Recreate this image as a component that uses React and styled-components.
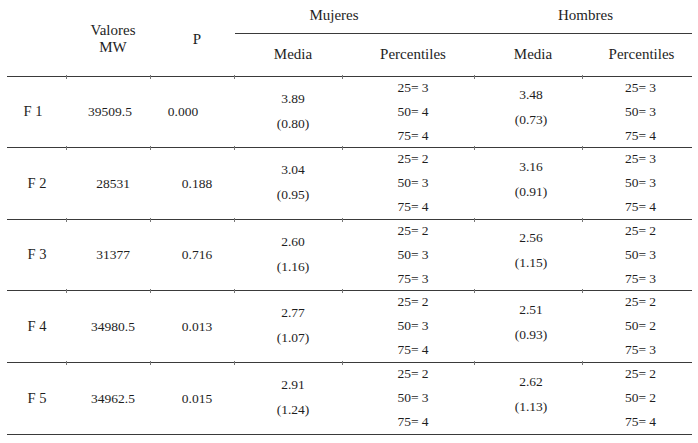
import React from "react";
import styled, { createGlobalStyle } from "styled-components";

const Global = createGlobalStyle`
  html, body { margin: 0; padding: 0; background: #fff; }
  body { font-family: "Liberation Serif", "Times New Roman", serif; color: #1e1e1e; }
`;

const Page = styled.div`
  padding: 0 0 0 7px;
  width: 698px;
  height: 443px;
  box-sizing: border-box;
  overflow: hidden;
`;

const Table = styled.table`
  border-collapse: collapse;
  table-layout: fixed;
  width: 685px;
`;

const HeadRow = styled.tr`
  height: ${(p) => p.$h}px;
`;

const Th = styled.th`
  font-weight: normal;
  font-size: 15px;
  line-height: 17px;
  text-align: center;
  vertical-align: middle;
  padding: ${(p) => (p.$pad ? p.$pad : "0 0 0 8px")};
  border-bottom: ${(p) => (p.$line ? "1px solid #3a3a3a" : "none")};
  white-space: nowrap;
`;

const BodyRow = styled.tr`
  height: ${(p) => p.$h}px;
  border-top: 1px solid #3a3a3a;
  border-bottom: ${(p) => (p.$last ? "1px solid #3a3a3a" : "none")};
`;

const Td = styled.td`
  position: relative;
  height: ${(p) => p.$h - 1}px;
  font-size: 13.5px;
  line-height: 17px;
  text-align: center;
  vertical-align: middle;
  padding: ${(p) => p.$pad || "0 0 0 8px"};
  white-space: nowrap;
  box-sizing: border-box;

  ${(p) =>
    p.$tick &&
    `
    &::before {
      content: "";
      position: absolute;
      left: -1px;
      top: -2px;
      width: 1px;
      height: 4px;
      background: #777;
    }
  `}
`;

const Label = styled(Td)`
  font-size: 14.5px;
`;

const StackBox = styled.div`
  line-height: ${(p) => p.$lh}px;
  margin: -6px 0;
`;

const Line = styled.div`
  display: block;
`;

const data = [
  { f: "F 1", mw: "39509.5", p: "0.000", mm: ["3.89", "(0.80)"], mp: ["25= 3", "50= 4", "75= 4"], hm: ["3.48", "(0.73)"], hp: ["25= 3", "50= 3", "75= 4"], shift: true, h: 71 },
  { f: "F 2", mw: "28531", p: "0.188", mm: ["3.04", "(0.95)"], mp: ["25= 2", "50= 3", "75= 4"], hm: ["3.16", "(0.91)"], hp: ["25= 3", "50= 3", "75= 4"], h: 72 },
  { f: "F 3", mw: "31377", p: "0.716", mm: ["2.60", "(1.16)"], mp: ["25= 2", "50= 3", "75= 3"], hm: ["2.56", "(1.15)"], hp: ["25= 2", "50= 3", "75= 3"], h: 71 },
  { f: "F 4", mw: "34980.5", p: "0.013", mm: ["2.77", "(1.07)"], mp: ["25= 2", "50= 3", "75= 4"], hm: ["2.51", "(0.93)"], hp: ["25= 2", "50= 2", "75= 3"], h: 72 },
  { f: "F 5", mw: "34962.5", p: "0.015", mm: ["2.91", "(1.24)"], mp: ["25= 2", "50= 3", "75= 4"], hm: ["2.62", "(1.13)"], hp: ["25= 2", "50= 2", "75= 4"], h: 72 },
];

const Stack = ({ items, lh }) => (
  <StackBox $lh={lh}>
    {items.map((t, i) => (
      <Line key={i}>{t}</Line>
    ))}
  </StackBox>
);

export default function App() {
  return (
    <Page>
      <Global />
      <Table>
        <colgroup>
          <col style={{ width: 60 }} />
          <col style={{ width: 84 }} />
          <col style={{ width: 84 }} />
          <col style={{ width: 108 }} />
          <col style={{ width: 132 }} />
          <col style={{ width: 108 }} />
          <col style={{ width: 109 }} />
        </colgroup>
        <thead>
          <HeadRow $h={33}>
            <Th rowSpan={2} $pad="0" />
            <Th rowSpan={2} $pad="3px 0 0 8px">
              Valores
              <br />
              MW
            </Th>
            <Th rowSpan={2} $pad="4px 0 0 8px">P</Th>
            <Th colSpan={2} $line $pad="0 42px 1px 0">Mujeres</Th>
            <Th colSpan={2} $line $pad="0 0 1px 4px">Hombres</Th>
          </HeadRow>
          <HeadRow $h={43}>
            <Th>Media</Th>
            <Th>Percentiles</Th>
            <Th>Media</Th>
            <Th>Percentiles</Th>
          </HeadRow>
        </thead>
        <tbody>
          {data.map((r, i) => (
            <BodyRow key={r.f} $h={r.h} $last={i === data.length - 1}>
              <Label $h={r.h} $pad={r.shift ? "0 8px 0 0" : "0"}>{r.f}</Label>
              <Td $h={r.h} $tick $pad={r.shift ? "0 0 0 2px" : "0 0 0 8px"}>{r.mw}</Td>
              <Td $h={r.h} $tick $pad={r.shift ? "0 20px 0 0" : "0 0 0 8px"}>{r.p}</Td>
              <Td $h={r.h} $tick $pad="0 0 2px 8px">
                <Stack items={r.mm} lh={25} />
              </Td>
              <Td $h={r.h} $tick $pad="0 0 0 8px">
                <Stack items={r.mp} lh={24} />
              </Td>
              <Td $h={r.h} $tick $pad="0 0 9px 4px">
                <Stack items={r.hm} lh={25} />
              </Td>
              <Td $h={r.h} $tick $pad="0 0 0 6px">
                <Stack items={r.hp} lh={24} />
              </Td>
            </BodyRow>
          ))}
        </tbody>
      </Table>
    </Page>
  );
}
